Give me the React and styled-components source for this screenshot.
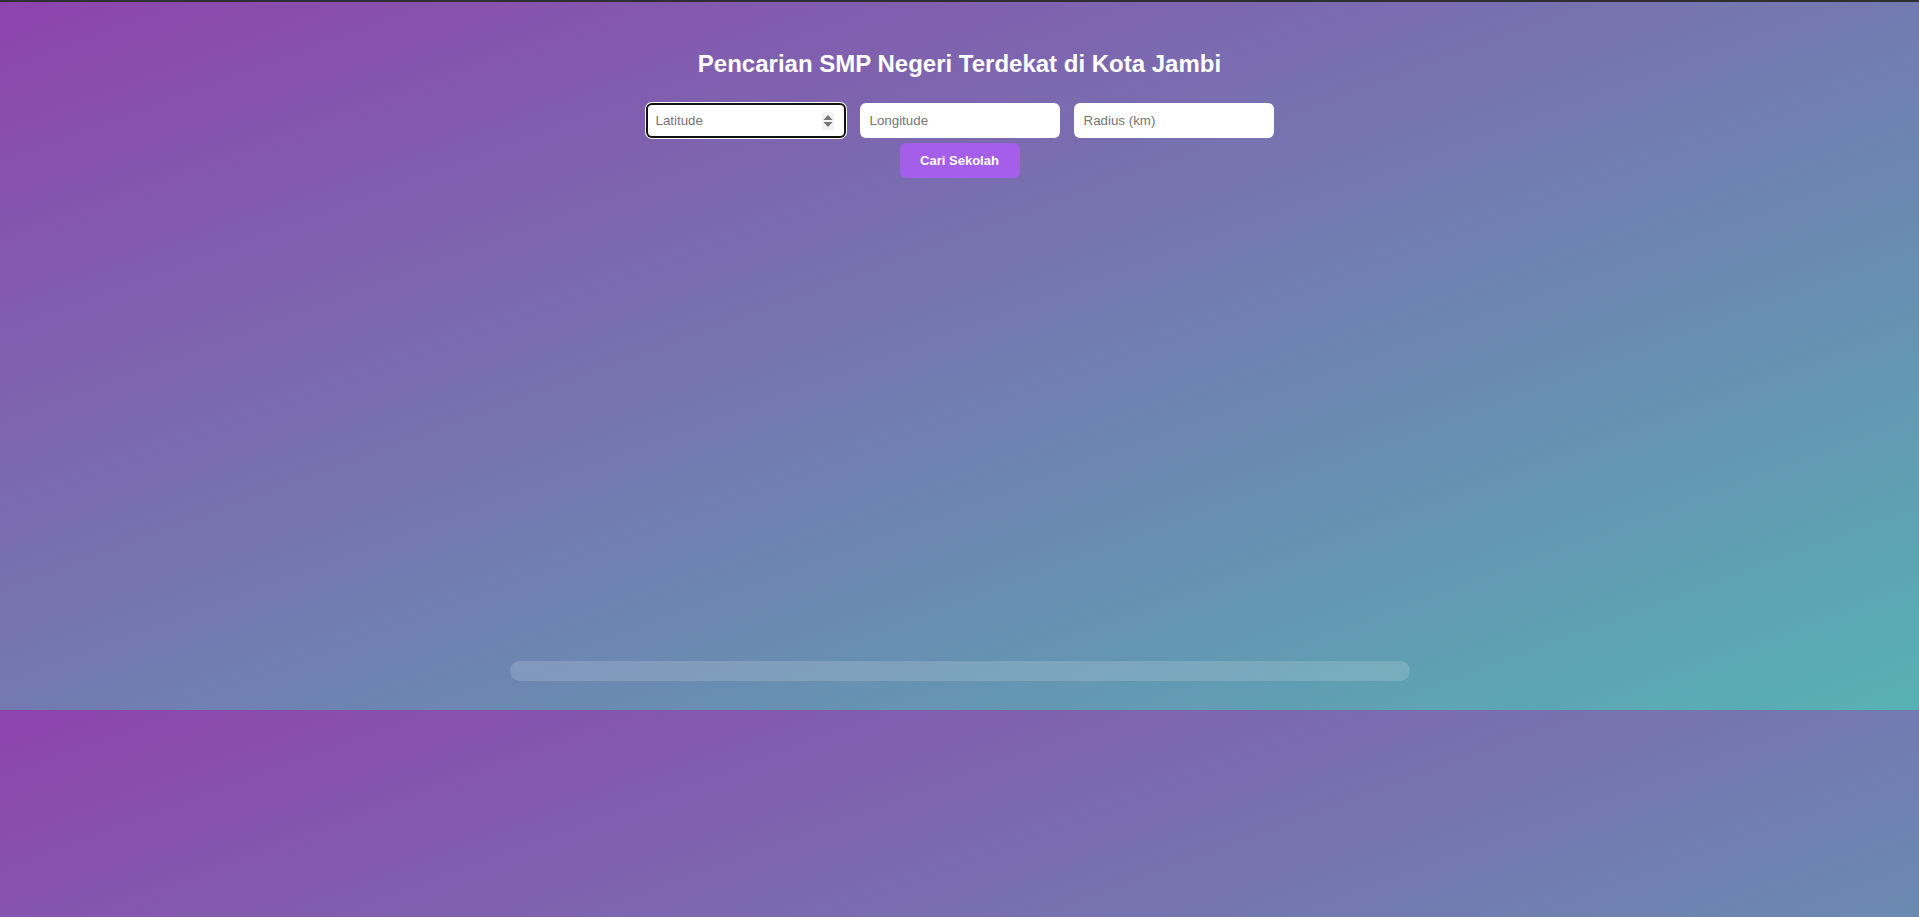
import React from 'react'
import styled, { createGlobalStyle } from 'styled-components'

const GlobalStyle = createGlobalStyle`
  html, body {
    margin: 0;
    padding: 0;
  }
  body {
    font-family: "Liberation Sans", Arial, sans-serif;
  }
`

const Page = styled.div`
  min-height: 917px;
  box-sizing: border-box;
  border-top: 2px solid #2f2e33;
  background-image: linear-gradient(to bottom right, #8e44ad, #57b1b4);
  background-size: 100% 708px;
  background-repeat: repeat-y;
  display: flex;
  flex-direction: column;
  align-items: center;
  padding-top: 48px;
`

const Title = styled.h1`
  margin: 0 0 25px;
  font-size: 24px;
  font-weight: 700;
  color: #fff;
  text-align: center;
`

const Form = styled.div`
  display: flex;
  gap: 14px;
`

const Field = styled.div`
  position: relative;
`

const Input = styled.input`
  width: 200px;
  height: 35px;
  box-sizing: border-box;
  padding: 8px 10px;
  border: none;
  border-radius: 6px;
  background: #fff;
  font-family: "Liberation Sans", Arial, sans-serif;
  font-size: 13.33px;
  color: #222;
  outline: none;
  box-shadow: ${p => (p.$focused ? 'inset 0 0 0 2px #111, 0 0 0 1px #fff' : 'none')};

  &::placeholder {
    color: #757575;
  }
`

const Spinner = styled.div`
  position: absolute;
  right: 12px;
  top: 50%;
  transform: translateY(-50%);
  display: flex;
`

const SearchButton = styled.button`
  margin-top: 5px;
  width: 120px;
  height: 35px;
  border: none;
  border-radius: 6px;
  background: #a55eea;
  color: #fff;
  font-family: "Liberation Sans", Arial, sans-serif;
  font-size: 13px;
  font-weight: 700;
  cursor: pointer;
`

const MapBox = styled.div`
  width: 900px;
  height: 463px;
  margin-top: 20px;
`

const ResultBar = styled.div`
  width: 900px;
  height: 20px;
  border-radius: 10px;
  background: rgba(255, 255, 255, 0.15);
`

const SpinIcon = () => (
  <svg width="12" height="18" viewBox="0 0 12 18">
    <rect x="0" y="0" width="12" height="18" rx="3" fill="#f3f3f3" />
    <path d="M1.5 8 L6 3 L10.5 8 Z" fill="#767676" />
    <path d="M1.5 10 L6 15 L10.5 10 Z" fill="#767676" />
  </svg>
)

export default function App () {
  return (
    <>
      <GlobalStyle />
      <Page>
        <Title>Pencarian SMP Negeri Terdekat di Kota Jambi</Title>
        <Form>
          <Field>
            <Input type="text" placeholder="Latitude" $focused />
            <Spinner><SpinIcon /></Spinner>
          </Field>
          <Field>
            <Input type="text" placeholder="Longitude" />
          </Field>
          <Field>
            <Input type="text" placeholder="Radius (km)" />
          </Field>
        </Form>
        <SearchButton>Cari Sekolah</SearchButton>
        <MapBox />
        <ResultBar />
      </Page>
    </>
  )
}
